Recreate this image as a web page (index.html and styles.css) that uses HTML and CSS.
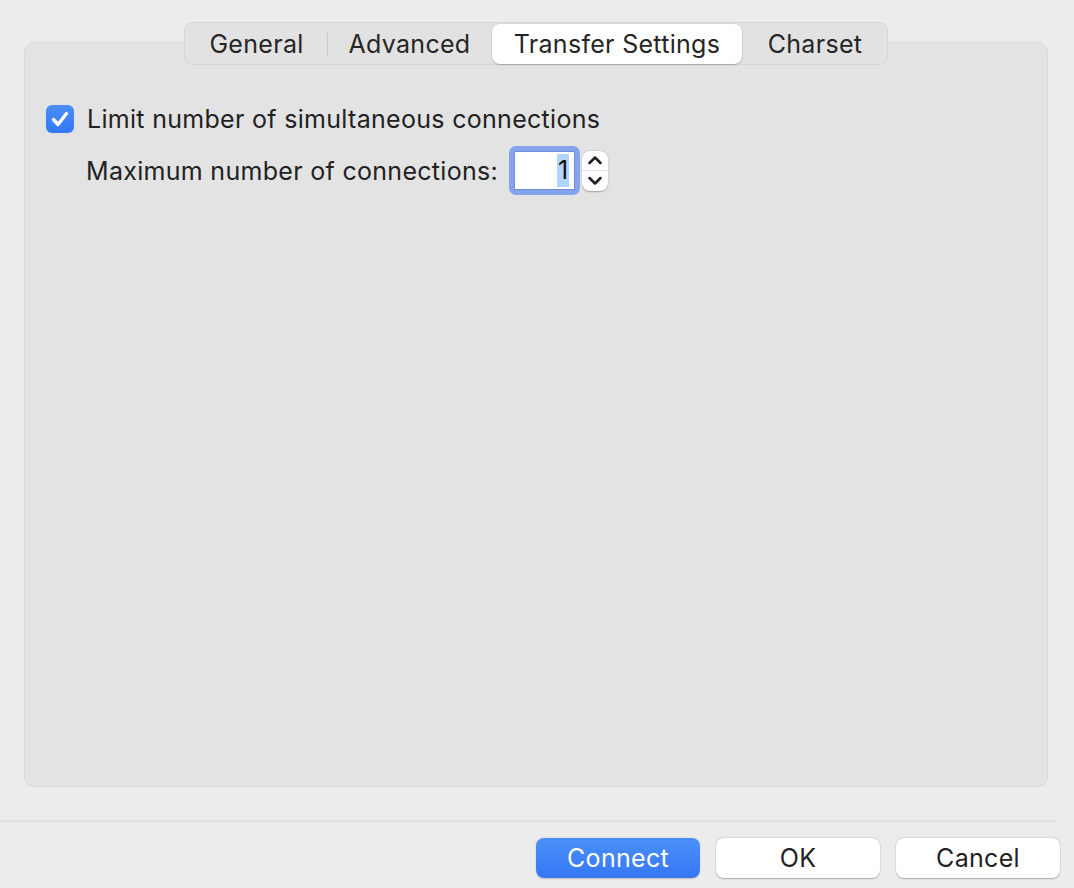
FILE: index.html
```html
<!DOCTYPE html>
<html>
<head>
<meta charset="utf-8">
<link rel="stylesheet" href="styles.css">
</head>
<body>
<div class="window">
  <div class="content">
    <div class="tabs">
      <div class="tab tab-general">General</div>
      <div class="tab-sep"></div>
      <div class="tab tab-advanced">Advanced</div>
      <div class="tab tab-transfer selected">Transfer Settings</div>
      <div class="tab tab-charset">Charset</div>
    </div>
    <div class="panel">
      <div class="row row-check">
        <span class="checkbox">
          <svg width="28" height="28" viewBox="0 0 28 28"><path d="M7.5 14.5 L12 19.5 L20.5 8.5" fill="none" stroke="#fff" stroke-width="3.4" stroke-linecap="round" stroke-linejoin="round"/></svg>
        </span>
        <span class="label">Limit number of simultaneous connections</span>
      </div>
      <div class="row row-max">
        <span class="label">Maximum number of connections:</span>
        <span class="field-ring"><span class="field"><span class="sel">1</span></span></span>
        <span class="stepper">
          <span class="step up"><svg width="16" height="10" viewBox="0 0 16 10"><path d="M2.5 8 L8 2.5 L13.5 8" fill="none" stroke="#1e1e1e" stroke-width="2.5" stroke-linecap="round" stroke-linejoin="round"/></svg></span>
          <span class="step down"><svg width="16" height="10" viewBox="0 0 16 10"><path d="M2.5 2 L8 7.5 L13.5 2" fill="none" stroke="#1e1e1e" stroke-width="2.5" stroke-linecap="round" stroke-linejoin="round"/></svg></span>
        </span>
      </div>
    </div>
  </div>
  <div class="divider"></div>
  <div class="footer">
    <button class="btn primary">Connect</button>
    <button class="btn">OK</button>
    <button class="btn">Cancel</button>
  </div>
</div>
</body>
</html>
```

FILE: styles.css
```css
html, body {
  margin: 0;
  padding: 0;
  background: #ececec;
}
body {
  width: 1074px;
  height: 888px;
  overflow: hidden;
  font-family: Inter, "Noto Sans", "Liberation Sans", sans-serif;
  color: #232323;
}
.window {
  display: flex;
  flex-direction: column;
  height: 888px;
}
.content {
  padding: 22px 26px 0 24px;
  display: flex;
  flex-direction: column;
}
.tabs {
  align-self: center;
  position: relative;
  z-index: 1;
  display: flex;
  align-items: center;
  height: 40px;
  padding: 1px 1px 0 1px;
  background: #e2e2e2;
  border: 1px solid #d6d6d6;
  border-radius: 9px;
  margin-bottom: -23px;
}
.tab {
  height: 40px;
  display: flex;
  align-items: center;
  justify-content: center;
  font-size: 25px;
  letter-spacing: 0.3px;
  color: #262626;
  border-radius: 8px;
}
.tab-general { width: 141px; }
.tab-advanced { width: 163px; }
.tab-transfer { width: 250px; margin: 0 2px 0 1px; }
.tab-charset { width: 142px; }
.tab-sep {
  width: 1px;
  height: 23px;
  background: #c9c9c9;
}
.tab.selected {
  background: #ffffff;
  box-shadow: 0 1px 1.5px rgba(0,0,0,0.22), 0 0 0 0.5px rgba(0,0,0,0.06);
}
.panel {
  height: 681px;
  background: #e3e3e3;
  border: 1px solid #d9d9d9;
  border-radius: 10px;
  padding: 62px 0 0 21px;
  box-sizing: content-box;
}
.row {
  display: flex;
  align-items: center;
}
.label {
  font-size: 25px;
  letter-spacing: 0.3px;
  color: #222;
}
.checkbox {
  width: 28px;
  height: 28px;
  border-radius: 6px;
  background: linear-gradient(#4a8ff9, #3378f4);
  display: flex;
  margin-right: 13px;
}
.row-check {
  height: 28px;
}
.row-max {
  margin-top: 13px;
  padding-left: 40px;
}
.field-ring {
  margin-left: 11px;
  width: 61px;
  height: 39px;
  padding: 5px;
  border-radius: 7px;
  background: #86a4ec;
  display: flex;
}
.field {
  flex: 1;
  background: #ffffff;
  border: 1px solid #6f8fd8;
  display: flex;
  align-items: center;
  justify-content: flex-end;
  padding-right: 5px;
}
.sel {
  background: #b3d4fc;
  font-size: 25px;
  line-height: 33px;
  padding: 0 1px;
  color: #111;
}
.stepper {
  margin-left: 2px;
  width: 26px;
  height: 40px;
  background: #ffffff;
  border-radius: 8px;
  box-shadow: 0 0.5px 1.5px rgba(0,0,0,0.3);
  display: flex;
  flex-direction: column;
}
.step {
  flex: 1;
  display: flex;
  align-items: center;
  justify-content: center;
}
.step.up {
  border-bottom: 1px solid #e0e0e0;
}
.divider {
  margin-top: 33px;
  height: 3px;
  width: 1056px;
  background: #e2e2e2;
}
.footer {
  display: flex;
  justify-content: flex-end;
  gap: 16px;
  padding: 15px 14px 0 0;
}
.btn {
  width: 164px;
  height: 40px;
  border: none;
  border-radius: 8px;
  background: #ffffff;
  font-family: Inter, "Noto Sans", "Liberation Sans", sans-serif;
  font-size: 25px;
  letter-spacing: 0.3px;
  color: #222;
  box-shadow: 0 0.5px 1.5px rgba(0,0,0,0.28), 0 0 0 0.5px rgba(0,0,0,0.06);
  padding: 0;
}
.btn.primary {
  background: linear-gradient(#4a90f9, #3677f5);
  color: #ffffff;
  box-shadow: 0 0.5px 1.5px rgba(0,0,0,0.2);
}
```
